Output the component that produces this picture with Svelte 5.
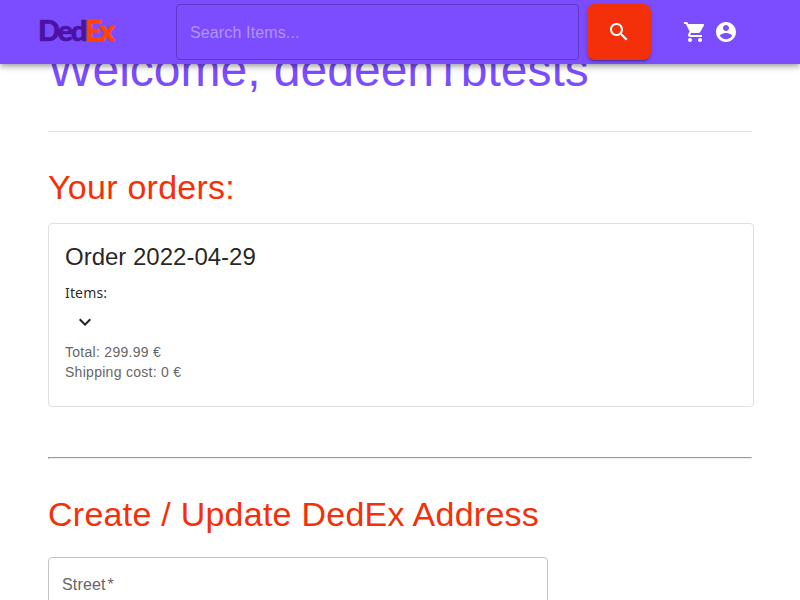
<script>
  const order = { date: '2022-04-29', total: '299.99', shipping: '0' };
</script>

<div class="page">
  <header>
    <div class="logo" aria-label="DedEx"><span>Ded</span><b>Ex</b></div>
    <input class="search" placeholder="Search Items..." />
    <button class="go" aria-label="Search">
      <svg width="24" height="24" viewBox="0 0 24 24"><path d="M15.5 14h-.79l-.28-.27C15.41 12.59 16 11.11 16 9.5 16 5.91 13.09 3 9.5 3S3 5.91 3 9.5 5.91 16 9.5 16c1.61 0 3.09-.59 4.23-1.57l.27.28v.79l5 4.99L20.49 19l-4.99-5zm-6 0C7.01 14 5 11.99 5 9.5S7.01 5 9.5 5 14 7.01 14 9.5 11.99 14 9.5 14z" /></svg>
    </button>
    <nav>
      <svg width="24" height="24" viewBox="0 0 24 24"><path d="M7 18c-1.1 0-1.99.9-1.99 2S5.900 22 7 22s2-.9 2-2-.9-2-2-2zM1 2v2h2l3.600 7.590-1.350 2.450c-.16.28-.25.61-.25.96 0 1.100.9 2 2 2h12v-2H7.420c-.14 0-.25-.11-.25-.25l.03-.12.9-1.630h7.450c.75 0 1.410-.41 1.750-1.030l3.580-6.490c.08-.14.12-.31.12-.48 0-.55-.45-1-1-1H5.210l-.94-2H1zm16 16c-1.100 0-1.990.9-1.990 2s.89 2 1.990 2 2-.9 2-2-.9-2-2-2z" /></svg>
      <svg width="24" height="24" viewBox="0 0 24 24"><path d="M12 2C6.480 2 2 6.480 2 12s4.480 10 10 10 10-4.480 10-10S17.520 2 12 2zm0 3c1.660 0 3 1.340 3 3s-1.340 3-3 3-3-1.340-3-3 1.340-3 3-3zm0 14.200c-2.500 0-4.710-1.280-6-3.220.03-1.990 4-3.080 6-3.080 1.990 0 5.970 1.090 6 3.080-1.290 1.940-3.500 3.220-6 3.220z" /></svg>
    </nav>
  </header>

  <main>
    <h1>Welcome, dedeen<span class="one">1</span>btests</h1>
    <div class="divider"></div>
    <h2 class="orders">Your orders:</h2>
    <section class="card">
      <h3>Order {order.date}</h3>
      <p class="items">Items:</p>
      <svg class="chevron" width="24" height="24" viewBox="0 0 24 24"><path d="M7.410 8.590 12 13.170l4.590-4.580L18 10l-6 6-6-6 1.410-1.410z" /></svg>
      <p class="line">Total: {order.total} €</p>
      <p class="line">Shipping cost: {order.shipping} €</p>
    </section>
    <hr />
    <h2 class="address">Create / Update DedEx Address</h2>
    <div class="field">Street<span>*</span></div>
  </main>
</div>

<style>
  .page {
    height: 600px;
    overflow: hidden;
    background: #fff;
    color: rgba(0, 0, 0, 0.87);
    font-family: "Liberation Sans", Arial, sans-serif;
    display: flex;
    flex-direction: column;
  }
  header {
    flex: none;
    height: 64px;
    box-sizing: border-box;
    padding: 4px 24px 4px 38px;
    display: flex;
    align-items: flex-start;
    background: #7c4dff;
    box-shadow: 0 2px 4px -1px rgba(0, 0, 0, 0.2), 0 4px 5px rgba(0, 0, 0, 0.14), 0 1px 10px rgba(0, 0, 0, 0.12);
    position: relative;
    z-index: 1;
  }
  .logo {
    width: 138px;
    height: 30px;
    padding-top: 11px;
    display: flex;
    font: 900 29px/30px Lato, sans-serif;
    letter-spacing: -2.3px;
    white-space: nowrap;
  }
  .logo span { width: 47px; color: #4b12a3; -webkit-text-stroke: 0.6px #4b12a3; }
  .logo b { color: #ff4500; font-weight: 900; -webkit-text-stroke: 0.6px #ff4500; }
  .search {
    width: 403px;
    height: 56px;
    box-sizing: border-box;
    padding: 2px 13px 0;
    border: 1px solid #6039c8;
    border-radius: 4px;
    background: transparent;
    font: 16px "Liberation Sans", sans-serif;
    letter-spacing: 0.13px;
    color: #fff;
    outline: none;
  }
  .search::placeholder { color: #b194ff; opacity: 1; }
  .go {
    margin-left: 8px;
    width: 64px;
    height: 56px;
    padding: 0;
    border: 0;
    border-radius: 8px;
    background: #f4300a;
    display: flex;
    align-items: center;
    justify-content: center;
    box-shadow: 0 3px 1px -2px rgba(0, 0, 0, 0.2), 0 2px 2px rgba(0, 0, 0, 0.14), 0 1px 5px rgba(0, 0, 0, 0.12);
  }
  .go svg, nav svg { fill: #fff; }
  nav { margin-left: 32px; height: 56px; display: flex; align-items: center; gap: 7px; }
  main { padding: 0 48px; display: flex; flex-direction: column; margin-top: -22px; }
  h1, h2, h3, p { margin: 0; font-weight: 400; white-space: nowrap; }
  h1 { font-size: 48px; line-height: 56px; color: #7c4dff; }
  .one {
    display: inline-block;
    line-height: 56px;
    clip-path: polygon(0 0, 100% 0, 100% 60%, 62.5% 60%, 62.5% 100%, 44% 100%, 44% 60%, 0 60%);
  }
  .divider { height: 1px; margin-top: 33px; background: #e0e0e0; }
  h2 { font-size: 34px; line-height: 42px; letter-spacing: 0.25px; color: #f4300a; }
  .orders { margin-top: 34px; }
  .card {
    width: 706px;
    height: 184px;
    box-sizing: border-box;
    margin-top: 15px;
    padding: 17px 16px;
    border: 1px solid #e0e0e0;
    border-radius: 4px;
    display: flex;
    flex-direction: column;
  }
  h3 { font-size: 24px; line-height: 32px; }
  .items { margin-top: 8px; font: 14px/24px "Noto Sans", sans-serif; letter-spacing: 0.15px; }
  .chevron { margin: 5px 0 8px 8px; fill: #212121; }
  .line { font-size: 14px; line-height: 20px; letter-spacing: 0.28px; color: #666; }
  hr {
    width: 704px;
    box-sizing: border-box;
    height: 2px;
    margin: 50px 0 0;
    border: 1px solid;
    border-color: #9a9a9a #eee #eee #9a9a9a;
  }
  .address { margin-top: 34px; }
  .field {
    width: 500px;
    height: 56px;
    box-sizing: border-box;
    margin-top: 22px;
    padding: 0 13px;
    border: 1px solid #c4c4c4;
    border-radius: 4px;
    font-size: 16px;
    line-height: 53px;
    letter-spacing: 0.15px;
    color: #666;
  }
  .field span { margin-left: 2px; }
</style>
